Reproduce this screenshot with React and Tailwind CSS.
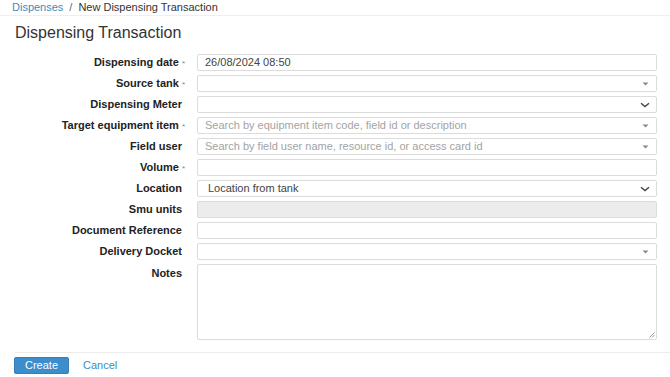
import React from 'react';

const font = { fontFamily: '"Liberation Sans", Arial, sans-serif' };

const Caret = () => (
    <svg width="7" height="4" viewBox="0 0 7 4" className="shrink-0">
        <path d="M0.5 0.5 L6.5 0.5 L3.5 3.5 Z" fill="#888" />
    </svg>
);

const Chevron = () => (
    <svg width="10" height="6" viewBox="0 0 10 6" className="shrink-0">
        <path d="M1 1.2 L5 4.6 L9 1.2" fill="none" stroke="#444" strokeWidth="1.4" />
    </svg>
);

const fields = [
    { label: 'Dispensing date', required: true, kind: 'input', value: '26/08/2024 08:50' },
    { label: 'Source tank', required: true, kind: 'select2' },
    { label: 'Dispensing Meter', kind: 'select' },
    { label: 'Target equipment item', required: true, kind: 'select2', placeholder: 'Search by equipment item code, field id or description' },
    { label: 'Field user', kind: 'select2', placeholder: 'Search by field user name, resource id, or access card id' },
    { label: 'Volume', required: true, kind: 'input' },
    { label: 'Location', kind: 'select', value: 'Location from tank' },
    { label: 'Smu units', kind: 'disabled' },
    { label: 'Document Reference', kind: 'input' },
    { label: 'Delivery Docket', kind: 'select2' },
];

const Field = ({ field }) => {
    const base = 'h-[17px] flex-1 flex items-center rounded-[2px] border text-[11px]';
    if (field.kind === 'disabled') {
        return <div className={`${base} border-[#dcdcdc] bg-[#ececec]`} />;
    }
    return (
        <div className={`${base} border-[#dcdcdc] bg-white ${field.kind === 'select' ? 'pl-[10px] pr-[6px]' : 'pl-[7px] pr-[7px]'}`}>
            <span className={`flex-1 truncate leading-none ${field.placeholder ? 'text-[#a3a3a3]' : 'text-[#444]'}`}>
                {field.value || field.placeholder || ''}
            </span>
            {field.kind === 'select2' && <Caret />}
            {field.kind === 'select' && <Chevron />}
        </div>
    );
};

export default function App() {
    return (
        <div className="w-[670px] h-[377px] bg-white overflow-hidden text-[#333]" style={font}>
            {/* Breadcrumb */}
            <div className="h-[16px] flex items-center px-[12px] text-[11px] border-b border-[#efefef] leading-none">
                <span className="text-[#3c8dbc]">Dispenses</span>
                <span className="px-[6px] text-[#666]">/</span>
                <span className="text-[#333]">New Dispensing Transaction</span>
            </div>

            {/* Title */}
            <div className="h-[34px] flex items-center px-[15px]">
                <h1 className="text-[16px] leading-none text-[#333]">Dispensing Transaction</h1>
            </div>

            {/* Form */}
            <div className="pt-[4px] pr-[13px] flex flex-col gap-[4px]">
                {fields.map((f, i) => (
                    <div key={i} className="flex items-center">
                        <div className={`w-[197px] shrink-0 flex justify-end items-center text-[11px] font-bold leading-none text-[#222] ${f.required ? 'pr-[12px]' : 'pr-[15px]'}`}>
                            <span>{f.label}</span>
                            {f.required && <span className="ml-[3px] mt-[3px] text-[8px] font-normal text-[#888] leading-none">*</span>}
                        </div>
                        <Field field={f} />
                    </div>
                ))}
                <div className="flex items-start">
                    <div className="w-[197px] shrink-0 flex justify-end pr-[15px] pt-[4px] text-[11px] font-bold leading-none text-[#222]">
                        Notes
                    </div>
                    <div className="relative flex-1 h-[76px] border border-[#dcdcdc] rounded-[2px] bg-white">
                        <svg width="6" height="6" viewBox="0 0 6 6" className="absolute right-[1px] bottom-[1px]">
                            <path d="M5.5 0.5 L0.5 5.5 M5.5 3 L3 5.5" stroke="#888" strokeWidth="0.8" />
                        </svg>
                    </div>
                </div>
            </div>

            {/* Footer */}
            <div className="ml-[14px] mt-[12px] border-t border-[#ececec] pt-[4px] flex items-center gap-[14px]">
                <button className="w-[55px] h-[17px] rounded-[2px] bg-[#3c8dcb] border border-[#367fb8] text-white text-[11px] leading-none">
                    Create
                </button>
                <span className="text-[11px] text-[#3c8dbc] leading-none">Cancel</span>
            </div>
        </div>
    );
}
